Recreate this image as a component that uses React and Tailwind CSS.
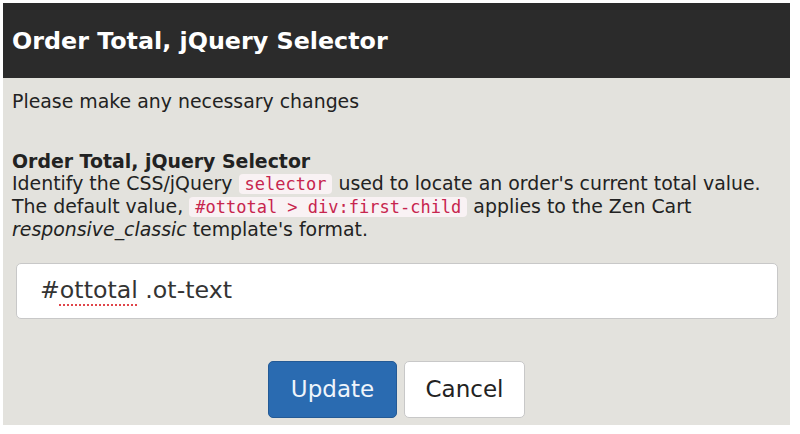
export default function App() {
  const code =
    "font-['DejaVu_Sans_Mono',monospace] text-[#c7254e] bg-[#f9f2f4] rounded-[4px] px-[6px] text-[17px]";
  return (
    <div className="w-[800px] h-[434px] bg-white p-[3px] pr-[10px] pb-[9px] font-['DejaVu_Sans','Verdana',sans-serif]">
      <div className="h-full bg-[#e3e2dd] flex flex-col">
        <div className="h-[75px] bg-[#2b2b2b] flex items-center px-[9px] pt-[3px]">
          <h1 className="text-white font-bold text-[23.8px] leading-none">
            Order Total, jQuery Selector
          </h1>
        </div>
        <div className="px-[9px] text-[#222] text-[18.9px] leading-[22px]">
          <p className="mt-[12px]">Please make any necessary changes</p>
          <div className="mt-[38px]">
            <div className="font-bold">Order Total, jQuery Selector</div>
            <div>
              Identify the CSS/jQuery <code className={code}>selector</code>{" "}
              used to locate an order's current total value.
            </div>
            <div>
              The default value,{" "}
              <code className={code}>#ottotal &gt; div:first-child</code>{" "}
              applies to the Zen Cart
            </div>
            <div>
              <em>responsive_classic</em> template's format.
            </div>
          </div>
        </div>
        <div className="px-[13px] mt-[23px] mr-[-1px]">
          <div className="h-[56px] bg-white border border-[#c8c8c8] rounded-[5px] flex items-center px-[23px] text-[23.7px] text-[#333]">
            <span>
              #
              <span className="underline decoration-dotted decoration-[#e0454a] decoration-2 underline-offset-[6px]">
                ottotal
              </span>{" "}
              .ot-text
            </span>
          </div>
        </div>
        <div className="flex justify-center gap-[7px] mt-[42px]">
          <button className="w-[129px] h-[57px] bg-[#2a6bb1] border border-[#245a95] rounded-[5px] text-[#eef4fb] text-[23px]">
            Update
          </button>
          <button className="w-[121px] h-[57px] bg-white border border-[#c8c8c8] rounded-[5px] text-[#222] text-[23px]">
            Cancel
          </button>
        </div>
      </div>
    </div>
  );
}
